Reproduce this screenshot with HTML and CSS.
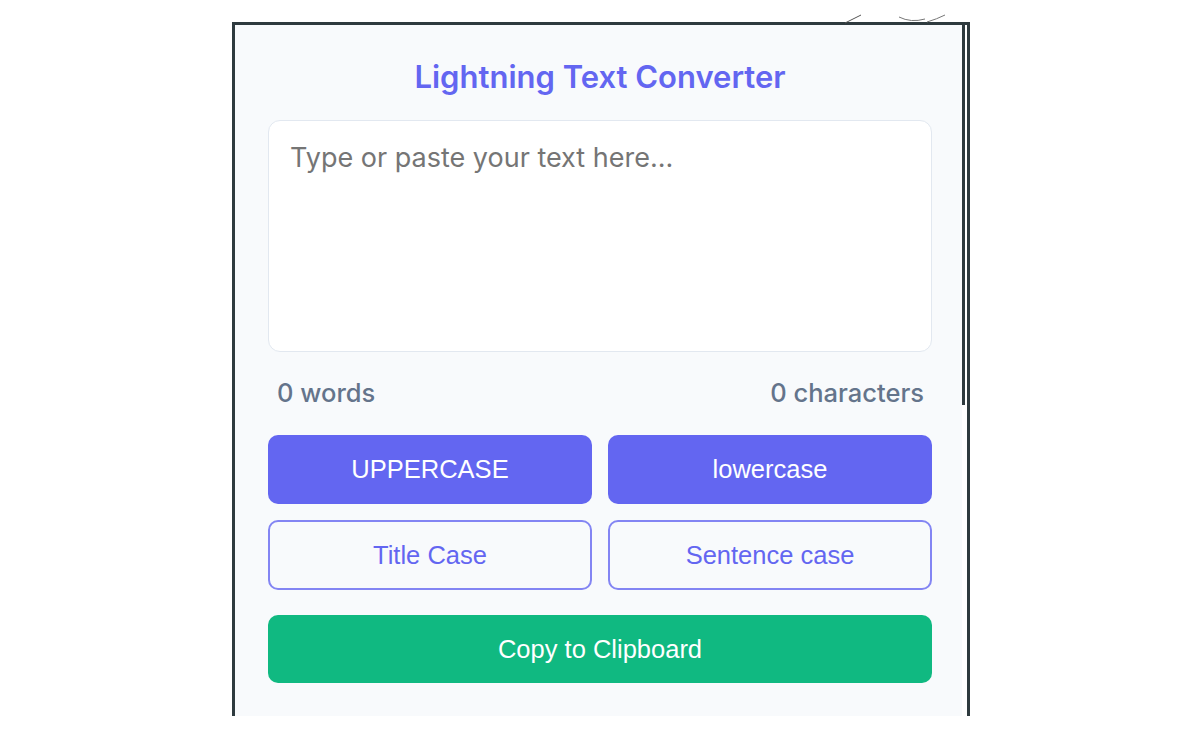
FILE: index.html
```html
<!DOCTYPE html>
<html lang="en">
<head>
    <meta charset="UTF-8">
    <meta name="viewport" content="width=device-width, initial-scale=1.0">
    <title>Lightning Text Converter</title>
    <link rel="stylesheet" href="styles.css">
</head>
<body>
    <div class="popup-frame">
        <svg class="frame-marks" width="120" height="14" viewBox="0 0 120 14" aria-hidden="true">
            <path d="M4 12 L20 4" stroke="#555" stroke-width="1" fill="none"/>
            <path d="M58 6 Q70 12 84 8" stroke="#777" stroke-width="1" fill="none"/>
            <path d="M86 11 Q96 8 104 4" stroke="#777" stroke-width="1" fill="none"/>
        </svg>
        <div class="popup">
            <div class="popup-content">
                <h1>Lightning Text Converter</h1>
                <textarea id="input-text" class="text-input" placeholder="Type or paste your text here..."></textarea>
                <div class="stats">
                    <span id="word-count">0 words</span>
                    <span id="char-count">0 characters</span>
                </div>
                <div class="button-grid">
                    <button class="btn btn-primary" data-mode="upper">UPPERCASE</button>
                    <button class="btn btn-primary" data-mode="lower">lowercase</button>
                    <button class="btn btn-outline" data-mode="title">Title Case</button>
                    <button class="btn btn-outline" data-mode="sentence">Sentence case</button>
                </div>
                <button id="copy-btn" class="btn btn-copy">Copy to Clipboard</button>
            </div>
            <div class="scroll-track">
                <div class="scroll-thumb"></div>
            </div>
        </div>
    </div>

    <script>
        const input = document.getElementById('input-text');
        const wordCount = document.getElementById('word-count');
        const charCount = document.getElementById('char-count');

        function updateStats() {
            const text = input.value;
            const words = text.trim() ? text.trim().split(/\s+/).length : 0;
            wordCount.textContent = `${words} words`;
            charCount.textContent = `${text.length} characters`;
        }

        function convert(mode, text) {
            if (mode === 'upper') return text.toUpperCase();
            if (mode === 'lower') return text.toLowerCase();
            if (mode === 'title') {
                return text.toLowerCase().replace(/\b\w/g, c => c.toUpperCase());
            }
            // sentence case
            return text.toLowerCase().replace(/(^\s*\w|[.!?]\s+\w)/g, c => c.toUpperCase());
        }

        document.querySelectorAll('[data-mode]').forEach(btn => {
            btn.addEventListener('click', () => {
                input.value = convert(btn.dataset.mode, input.value);
                updateStats();
            });
        });

        document.getElementById('copy-btn').addEventListener('click', () => {
            input.select();
            document.execCommand('copy');
        });

        input.addEventListener('input', updateStats);
        updateStats();
    </script>
</body>
</html>
```

FILE: styles.css
```css
body {
    margin: 0;
    background-color: #ffffff;
    font-family: Inter, "Noto Sans", sans-serif;
}
.popup-frame {
    position: relative;
    width: 732px;
    height: 691px;
    margin: 22px 0 0 232px;
    border-top: 3px solid #2e3a3e;
    border-left: 3px solid #2e3a3e;
    border-right: 3px solid #2e3a3e;
}
.frame-marks {
    position: absolute;
    top: -14px;
    right: 6px;
}
.popup {
    display: flex;
    height: 100%;
}
.popup-content {
    flex: 1;
    background-color: #f8fafc;
    padding: 33px 30px 0 33px;
}
.scroll-track {
    width: 5px;
    background-color: #ffffff;
}
.scroll-thumb {
    width: 3px;
    height: 380px;
    background-color: #2e3a3e;
}
h1 {
    margin: 0 0 24px;
    text-align: center;
    color: #6366f1;
    font-size: 31px;
    font-weight: 600;
    line-height: 38px;
}
.text-input {
    display: block;
    box-sizing: border-box;
    width: 100%;
    height: 232px;
    margin: 0;
    padding: 20px 21px;
    border: 1px solid #e2e8f0;
    border-radius: 12px;
    background-color: #ffffff;
    font-family: Inter, "Noto Sans", sans-serif;
    font-size: 27px;
    color: #334155;
    resize: none;
    outline: none;
}
.text-input::placeholder {
    color: #757575;
}
.stats {
    display: flex;
    justify-content: space-between;
    margin-top: 26px;
    padding: 0 8px 0 9px;
    color: #64748b;
    font-size: 25.5px;
    font-weight: 500;
    line-height: 30px;
}
.button-grid {
    display: grid;
    grid-template-columns: 1fr 1fr;
    gap: 16px;
    margin-top: 27px;
}
.btn {
    box-sizing: border-box;
    height: 69px;
    border-radius: 10px;
    font-family: "Liberation Sans", Arial, sans-serif;
    font-size: 25.5px;
    cursor: pointer;
}
.btn-primary {
    border: none;
    background-color: #6366f1;
    color: #ffffff;
}
.btn-outline {
    height: 70px;
    border: 2px solid #8385f3;
    background-color: transparent;
    color: #6366f1;
}
.btn-copy {
    display: block;
    width: 100%;
    height: 68px;
    margin-top: 25px;
    border: none;
    background-color: #10b981;
    color: #ffffff;
}
```
